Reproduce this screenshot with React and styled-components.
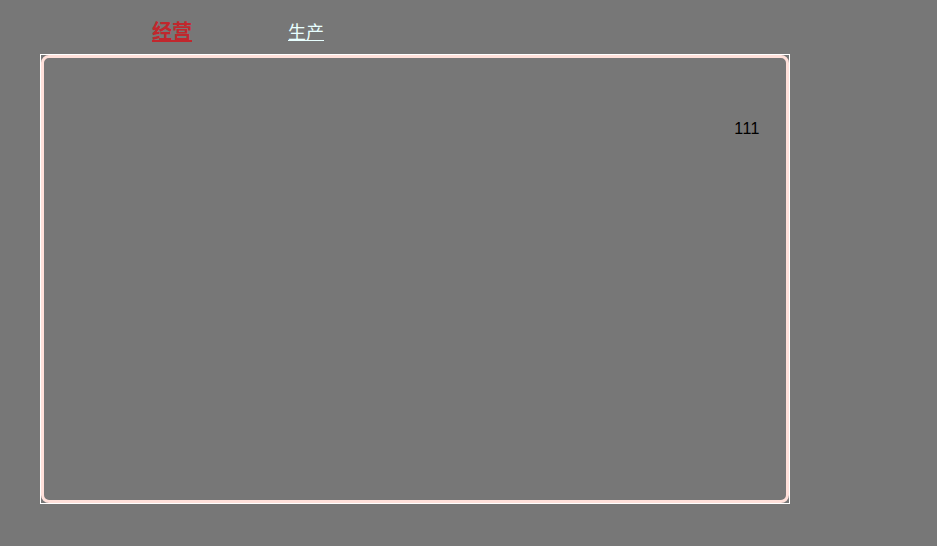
import styled, { createGlobalStyle } from "styled-components";

const GlobalStyle = createGlobalStyle`
  html, body {
    margin: 0;
    padding: 0;
    background: #777777;
    font-family: "Liberation Sans", "Noto Sans CJK SC", sans-serif;
  }
`;

const Page = styled.div`
  width: 937px;
  height: 546px;
  background: #777777;
  overflow: hidden;
`;

const Tabs = styled.div`
  display: flex;
  align-items: baseline;
  height: 54px;
  padding: 20px 0 0 152px;
  box-sizing: border-box;
`;

const Tab = styled.a`
  font-family: "Noto Sans CJK SC", sans-serif;
  font-size: ${(p) => (p.$active ? "20px" : "18px")};
  font-weight: ${(p) => (p.$active ? "bold" : "normal")};
  color: ${(p) => (p.$active ? "#c1272d" : "#e8ffff")};
  text-decoration: underline;
  margin-right: ${(p) => (p.$active ? "96px" : "0")};
  line-height: 22px;
  cursor: pointer;
`;

const Frame = styled.div`
  margin-left: 40px;
  width: 750px;
  height: 450px;
  box-sizing: border-box;
  border: 1px solid #ffffff;
`;

const Panel = styled.div`
  height: 100%;
  box-sizing: border-box;
  border: 3px solid #ffe0da;
  border-radius: 8px;
  display: flex;
  justify-content: flex-end;
  align-items: flex-start;
  padding: 62px 26px 0 0;
`;

const Value = styled.span`
  font-size: 16px;
  color: #000000;
  line-height: 18px;
  letter-spacing: 0.5px;
`;

export default function App() {
  return (
    <Page>
      <GlobalStyle />
      <Tabs>
        <Tab $active>经营</Tab>
        <Tab>生产</Tab>
      </Tabs>
      <Frame>
        <Panel>
          <Value>111</Value>
        </Panel>
      </Frame>
    </Page>
  );
}
